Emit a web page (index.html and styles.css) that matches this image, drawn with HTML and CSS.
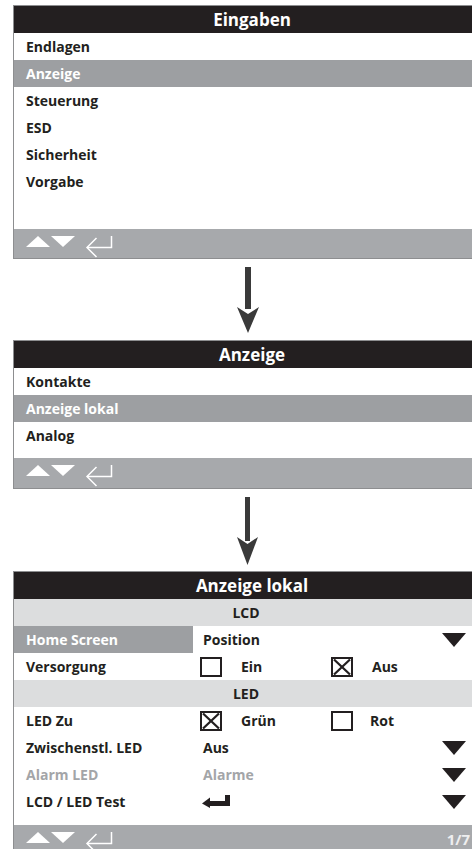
FILE: index.html
```html
<!DOCTYPE html>
<html lang="de">
<head>
<meta charset="utf-8">
<title>Eingaben</title>
<link rel="stylesheet" href="styles.css">
</head>
<body>
<div class="page">

  <section class="panel">
    <div class="panel-head">Eingaben</div>
    <div class="list list-top">
      <div class="row">Endlagen</div>
      <div class="row sel">Anzeige</div>
      <div class="row">Steuerung</div>
      <div class="row">ESD</div>
      <div class="row">Sicherheit</div>
      <div class="row">Vorgabe</div>
    </div>
    <div class="foot">
      <svg class="nav" width="100" height="29" viewBox="0 0 100 29">
        <polygon points="12,18 24,7 36,18" fill="#fff"/>
        <polygon points="37,7 61,7 49,18" fill="#fff"/>
        <path d="M97.5 7 V18.5 H73" fill="none" stroke="#fff" stroke-width="1.5"/>
        <path d="M82.5 9 L73 18.5 L82.5 28" fill="none" stroke="#fff" stroke-width="1.5"/>
      </svg>
    </div>
  </section>

  <div class="flow-arrow first">
    <svg width="22" height="66" viewBox="0 0 22 66">
      <rect x="8" y="0" width="6" height="42" fill="#3a3a3a"/>
      <polygon points="0,40 11,47 22,40 11,66" fill="#3a3a3a"/>
    </svg>
  </div>

  <section class="panel">
    <div class="panel-head">Anzeige</div>
    <div class="list list-mid">
      <div class="row">Kontakte</div>
      <div class="row sel">Anzeige lokal</div>
      <div class="row">Analog</div>
    </div>
    <div class="foot foot-mid">
      <svg class="nav" width="100" height="29" viewBox="0 0 100 29">
        <polygon points="12,18 24,7 36,18" fill="#fff"/>
        <polygon points="37,7 61,7 49,18" fill="#fff"/>
        <path d="M97.5 7 V18.5 H73" fill="none" stroke="#fff" stroke-width="1.5"/>
        <path d="M82.5 9 L73 18.5 L82.5 28" fill="none" stroke="#fff" stroke-width="1.5"/>
      </svg>
    </div>
  </section>

  <div class="flow-arrow second">
    <svg width="22" height="68" viewBox="0 0 22 68">
      <rect x="8" y="0" width="5" height="44" fill="#3a3a3a"/>
      <polygon points="0,40 10.5,47 21,40 10.5,68" fill="#3a3a3a"/>
    </svg>
  </div>

  <section class="panel">
    <div class="panel-head">Anzeige lokal</div>
    <div class="list list-bot">
      <div class="section-row">LCD</div>

      <div class="frow">
        <div class="lab sel">Home Screen</div>
        <div class="val">Position</div>
        <span class="drop"></span>
      </div>

      <div class="frow">
        <div class="lab">Versorgung</div>
        <div class="opts">
          <span class="cb"></span><span class="opt">Ein</span>
          <span class="cb x"><svg width="18" height="16" viewBox="0 0 18 16"><path d="M1 0.5 L17 15.5 M17 0.5 L1 15.5" stroke="#231f20" stroke-width="2.2"/></svg></span><span class="opt">Aus</span>
        </div>
      </div>

      <div class="section-row">LED</div>

      <div class="frow">
        <div class="lab">LED Zu</div>
        <div class="opts">
          <span class="cb x"><svg width="18" height="16" viewBox="0 0 18 16"><path d="M1 0.5 L17 15.5 M17 0.5 L1 15.5" stroke="#231f20" stroke-width="2.2"/></svg></span><span class="opt">Grün</span>
          <span class="cb"></span><span class="opt opt-wide">Rot</span>
        </div>
      </div>

      <div class="frow">
        <div class="lab">Zwischenstl. LED</div>
        <div class="val">Aus</div>
        <span class="drop"></span>
      </div>

      <div class="frow dim">
        <div class="lab">Alarm LED</div>
        <div class="val">Alarme</div>
        <span class="drop"></span>
      </div>

      <div class="frow">
        <div class="lab">LCD / LED Test</div>
        <div class="val">
          <svg class="enter" width="28" height="13" viewBox="0 0 28 13">
            <polygon points="0,8.5 8,2.5 8,13" fill="#231f20"/>
            <rect x="6" y="6" width="22" height="5" fill="#231f20"/>
            <rect x="23" y="0" width="5" height="11" fill="#231f20"/>
          </svg>
        </div>
        <span class="drop"></span>
      </div>
    </div>
    <div class="foot foot-bot">
      <svg class="nav" width="100" height="29" viewBox="0 0 100 29">
        <polygon points="12,18 24,7 36,18" fill="#fff"/>
        <polygon points="37,7 61,7 49,18" fill="#fff"/>
        <path d="M97.5 7 V18.5 H73" fill="none" stroke="#fff" stroke-width="1.5"/>
        <path d="M82.5 9 L73 18.5 L82.5 28" fill="none" stroke="#fff" stroke-width="1.5"/>
      </svg>
      <span class="page-no">1/7</span>
    </div>
  </section>

</div>
</body>
</html>
```

FILE: styles.css
```css
html, body {
  margin: 0;
  padding: 0;
  background: #ffffff;
  overflow: hidden;
}

body {
  width: 472px;
  height: 849px;
  font-family: "Open Sans", "Noto Sans", "Liberation Sans", sans-serif;
  font-weight: 700;
  font-size: 14px;
  color: #231f20;
}

.page {
  padding: 5px 0 0 13px;
  display: flex;
  flex-direction: column;
}

.panel {
  border-top: 1px solid #8d8e90;
  border-left: 1px solid #8d8e90;
  border-bottom: 1px solid #8d8e90;
  display: flex;
  flex-direction: column;
}

.panel-head {
  height: 27px;
  background: #231f20;
  color: #ffffff;
  font-size: 17px;
  line-height: 27px;
  text-align: center;
  padding-left: 18px;
}

.list {
  display: flex;
  flex-direction: column;
}

.list-top { height: 196px; }
.list-mid { height: 90px; }
.list-bot { height: 226px; }

.row {
  height: 27px;
  line-height: 27px;
  padding-left: 12px;
}

.sel {
  background: #9d9fa2;
  color: #ffffff;
}

.foot {
  height: 29px;
  background: #a7a9ac;
  display: flex;
  align-items: flex-start;
  justify-content: space-between;
}

.foot-mid { height: 30px; }
.foot-bot { height: 40px; }

.nav { display: block; }

.page-no {
  color: #eeeeef;
  font-size: 15px;
  line-height: 15px;
  margin-top: 7px;
  margin-right: 2px;
}

.flow-arrow {
  display: flex;
  justify-content: center;
  padding-left: 11px;
}

.flow-arrow.first {
  height: 81px;
  padding-top: 8px;
  box-sizing: border-box;
}

.flow-arrow.second {
  height: 82px;
  padding-top: 8px;
  box-sizing: border-box;
}

.flow-arrow svg { display: block; }

.section-row {
  height: 27px;
  line-height: 27px;
  background: #dcddde;
  text-align: center;
  padding-left: 6px;
}

.frow {
  height: 27px;
  display: flex;
  align-items: center;
}

.lab {
  width: 167px;
  height: 27px;
  line-height: 27px;
  padding-left: 12px;
  flex: none;
}

.val {
  flex: 1;
  padding-left: 10px;
  display: flex;
  align-items: center;
}

.opts {
  display: flex;
  align-items: center;
  padding-left: 7px;
}

.cb {
  width: 18px;
  height: 16px;
  border: 2px solid #231f20;
  flex: none;
  display: flex;
  align-items: center;
  justify-content: center;
}

.cb svg { display: block; }

.opt {
  width: 90px;
  padding-left: 19px;
}

.opt-wide { padding-left: 17px; }

.drop {
  width: 0;
  height: 0;
  border-left: 12.5px solid transparent;
  border-right: 12.5px solid transparent;
  border-top: 14px solid #231f20;
  margin-right: 6px;
  flex: none;
}

.dim { color: #a3a5a8; }

.enter { display: block; margin-left: -1px; }
```
